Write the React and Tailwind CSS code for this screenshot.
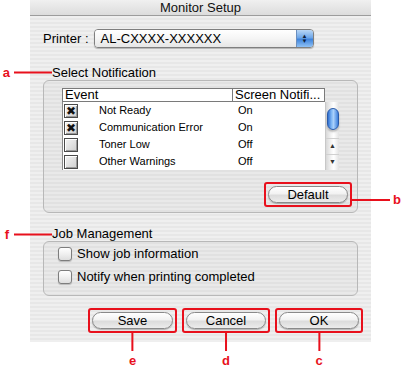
import React from "react";

const RED = "bg-[#e8101c]";

function AquaButton({ label }) {
  return (
    <div className="h-[17px] w-full rounded-full border border-[#8a8a8a] bg-[linear-gradient(180deg,#ffffff_0%,#f2f2f2_45%,#dcdcdc_55%,#ececec_100%)] shadow-[0_1px_1px_rgba(0,0,0,0.25)] flex items-center justify-center text-[13px] leading-[15px] text-black">
      {label}
    </div>
  );
}

function RedBox({ children, w, below }) {
  return (
    <div className={`relative ${w} h-[25px] border-2 border-[#e8101c] rounded-[3px] p-[2px] flex items-center`}>
      {children}
      {below && (
        <div className="absolute top-full left-1/2 -translate-x-1/2 flex flex-col items-center">
          <div className={`w-[2px] h-[20px] ${RED}`} />
          <div className="text-[#e8101c] font-bold text-[13px] leading-[12px] mt-[4px]">{below}</div>
        </div>
      )}
    </div>
  );
}

function TableCheck({ checked }) {
  return (
    <div className="w-[14px] h-[14px] border border-[#4a4a4a] bg-[linear-gradient(135deg,#f4f4f4_0%,#cfcfcf_100%)] shadow-[inset_1px_1px_0_#ffffff,inset_-1px_-1px_0_#9a9a9a] flex items-center justify-center">
      {checked && <span className="text-[12px] leading-[12px] text-[#111] font-['DejaVu_Sans',sans-serif]">✖</span>}
    </div>
  );
}

function AquaCheck() {
  return (
    <div className="w-[14px] h-[14px] rounded-[3px] border border-[#7d7d7d] bg-[linear-gradient(180deg,#ffffff_0%,#f0f0f0_50%,#dedede_100%)] shadow-[0_1px_1px_rgba(0,0,0,0.2)]" />
  );
}

export default function App() {
  const rows = [
    { name: "Not Ready", v: "On", c: true },
    { name: "Communication Error", v: "On", c: true },
    { name: "Toner Low", v: "Off", c: false },
    { name: "Other Warnings", v: "Off", c: false },
  ];
  return (
    <div className="relative w-[401px] h-[372px] bg-white font-['Liberation_Sans',Arial,sans-serif] text-black overflow-hidden">
      <div className="ml-[30px] w-[341px] h-[342px] flex flex-col bg-[repeating-linear-gradient(180deg,#efefef_0px,#efefef_2px,#e7e7e7_2px,#e7e7e7_4px)]">
        {/* Title bar */}
        <div className="h-[16px] border-b border-[#9c9c9c] bg-[linear-gradient(180deg,#f0f0f0_0%,#dcdcdc_100%)] text-center text-[13px] leading-[15px] text-[#111]">
          Monitor Setup
        </div>

        {/* Printer row */}
        <div className="mt-[13px] pl-[13px] flex items-center h-[19px]">
          <span className="text-[13px] leading-[15px]">Printer :</span>
          <div className="ml-[5px] w-[220px] h-[19px] flex rounded-[4px] border border-[#7f7f7f] shadow-[0_1px_1px_rgba(0,0,0,0.25)] overflow-hidden">
            <div className="flex-1 bg-[linear-gradient(180deg,#ffffff_0%,#f5f5f5_50%,#e6e6e6_100%)] pl-[6px] text-[13px] leading-[17px]">
              AL-CXXXX-XXXXXX
            </div>
            <div className="w-[17px] bg-[linear-gradient(180deg,#b9d7f6_0%,#6ea6e8_45%,#3f84dc_55%,#8fc1f5_100%)] flex flex-col items-center justify-center border-l border-[#6b8fbf]">
              <span className="text-[6px] leading-[5px] text-[#10223a]">▲</span>
              <span className="text-[6px] leading-[5px] text-[#10223a]">▼</span>
            </div>
          </div>
        </div>

        {/* Select Notification label */}
        <div className="mt-[17px] pl-[22px] h-[15px] flex items-center">
          <div className="relative text-[13px] leading-[15px]">
            <div className="absolute right-full top-[7px] flex items-center -translate-y-1/2">
              <span className="text-[#e8101c] font-bold text-[13px] leading-[13px] mr-[4px]">a</span>
              <div className={`w-[38px] h-[2px] ${RED}`} />
            </div>
            Select Notification
          </div>
        </div>

        {/* Group box 1 */}
        <div className="mx-[13px] h-[133px] rounded-[6px] border border-[#b8b8b8] bg-black/[0.025] flex flex-col">
          <div className="mt-[7px] ml-[18px] w-[277px]">
            <div className="flex h-[14px]">
              <div className="w-[171px] h-[14px] border border-[#7a7a7a] bg-white text-[13px] leading-[12px] pl-[2px]">Event</div>
              <div className="w-[92px] h-[14px] border border-l-0 border-[#7a7a7a] bg-white text-[13px] leading-[12px] pl-[2px] whitespace-nowrap overflow-hidden">Screen Notifi...</div>
            </div>
            <div className="flex h-[68px]">
              <div className="w-[263px] bg-white border-l border-[#8a8a8a] flex flex-col">
                {rows.map((r) => (
                  <div key={r.name} className="h-[17px] flex items-center text-[11px]">
                    <div className="w-[170px] flex items-center pl-[1px]">
                      <TableCheck checked={r.c} />
                      <span className="ml-[21px] whitespace-nowrap">{r.name}</span>
                    </div>
                    <span className="ml-[5px]">{r.v}</span>
                  </div>
                ))}
              </div>
              <div className="w-[14px] flex flex-col border-l border-[#c8c8c8] bg-[linear-gradient(90deg,#d8d8d8_0%,#f4f4f4_40%,#ffffff_60%,#e2e2e2_100%)]">
                <div className="h-[36px] flex justify-center pt-[6px]">
                  <div className="w-[12px] h-[22px] rounded-full border border-[#2a5aa8] bg-[linear-gradient(90deg,#2f6fd0_0%,#7fb6f4_35%,#a9d0fb_55%,#3d7fdc_100%)] shadow-[0_2px_2px_rgba(0,0,0,0.25)]" />
                </div>
                <div className="h-[16px] flex items-center justify-center border-t border-[#d0d0d0] text-[7px] text-[#333]">▲</div>
                <div className="h-[16px] flex items-center justify-center border-t border-[#d0d0d0] text-[7px] text-[#333]">▼</div>
              </div>
            </div>
          </div>
          <div className="mt-[12px] flex justify-end pr-[5px]">
            <div className="relative">
              <RedBox w="w-[88px]">
                <AquaButton label="Default" />
              </RedBox>
              <div className="absolute left-full top-[11px] flex items-center">
                <div className={`w-[38px] h-[2px] ${RED}`} />
                <span className="ml-[3px] text-[#e8101c] font-bold text-[13px] leading-[13px]">b</span>
              </div>
            </div>
          </div>
        </div>

        {/* Job Management label */}
        <div className="mt-[14px] pl-[22px] h-[14px] flex items-center">
          <div className="relative text-[13px] leading-[14px]">
            <div className="absolute right-full top-[7px] flex items-center -translate-y-1/2">
              <span className="text-[#e8101c] font-bold text-[13px] leading-[13px] mr-[5px]">f</span>
              <div className={`w-[38px] h-[2px] ${RED}`} />
            </div>
            Job Management
          </div>
        </div>

        {/* Group box 2 */}
        <div className="mx-[13px] h-[55px] rounded-[6px] border border-[#b8b8b8] bg-black/[0.025] flex flex-col pl-[14px] pt-[4px] gap-[8px]">
          <div className="flex items-center h-[15px]">
            <AquaCheck />
            <span className="ml-[5px] text-[13px] leading-[15px]">Show job information</span>
          </div>
          <div className="flex items-center h-[15px]">
            <AquaCheck />
            <span className="ml-[5px] text-[13px] leading-[15px]">Notify when printing completed</span>
          </div>
        </div>

        {/* Buttons */}
        <div className="mt-[12px] pl-[58px] flex gap-[5px]">
          <RedBox w="w-[89px]" below="e"><AquaButton label="Save" /></RedBox>
          <RedBox w="w-[88px]" below="d"><AquaButton label="Cancel" /></RedBox>
          <RedBox w="w-[88px]" below="c"><AquaButton label="OK" /></RedBox>
        </div>
      </div>
    </div>
  );
}
